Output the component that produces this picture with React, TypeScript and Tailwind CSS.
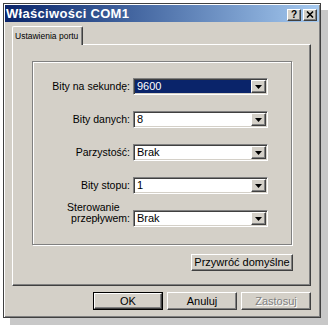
import clsx from "clsx";

const raised =
  "border border-t-white border-l-white border-r-[#404040] border-b-[#404040] shadow-[inset_-1px_-1px_0_#808080] bg-[#d4d0c8]";

const Arrow = () => (
  <svg width="7" height="4" viewBox="0 0 7 4">
    <path d="M0 0h7L3.5 4z" fill="#000" />
  </svg>
);

const Select = ({ value, selected }: { value: string; selected?: boolean }) => (
  <div className="flex h-[17px] w-[135px] border border-t-[#808080] border-l-[#808080] border-b-white border-r-white bg-white p-[1px] shadow-[inset_1px_1px_0_#404040,inset_-1px_-1px_0_#d4d0c8]">
    <div
      className={clsx(
        "flex flex-1 items-center pl-[2px] text-[11px] leading-none",
        selected ? "bg-[#0a246a] text-white" : "text-black"
      )}
    >
      {value}
    </div>
    <div className={clsx(raised, "flex w-[15px] items-center justify-center")}>
      <Arrow />
    </div>
  </div>
);

const Row = ({ label, value, selected }: { label: React.ReactNode; value: string; selected?: boolean }) => (
  <div className="flex h-[17px] items-end">
    <div className="w-[100px] pb-[3px] pr-[3px] text-right text-[10.5px] leading-[11px] text-black">{label}</div>
    <Select value={value} selected={selected} />
  </div>
);

const Button = ({ children, className, disabled }: { children: React.ReactNode; className?: string; disabled?: boolean }) => (
  <div
    className={clsx(
      raised,
      "flex items-center justify-center text-[11px]",
      disabled ? "text-[#808080] [text-shadow:1px_1px_0_#fff]" : "text-black",
      className
    )}
  >
    {children}
  </div>
);

export default function App() {
  return (
    <div className="h-[328px] w-[328px] overflow-hidden bg-white pl-[3px] pt-[3px] font-['Liberation_Sans',Arial,sans-serif]">
      <div className="flex h-[315px] w-[318px] flex-col border border-[#404040] bg-[#d4d0c8] p-[1px] shadow-[inset_1px_1px_0_#fff,inset_-1px_-1px_0_#808080,7px_7px_0_#c8c8c8]">
        {/* title bar */}
        <div className="flex h-[17px] items-center bg-linear-to-r from-[#0a246a] to-[#a6caf0] pl-[1px] pr-[2px]">
          <span className="flex-1 text-[13px] font-bold tracking-[0.3px] text-white">Właściwości COM1</span>
          <div className={clsx(raised, "mt-[2px] flex h-[12px] w-[14px] items-center justify-center text-[10px] font-bold leading-none text-black")}>?</div>
          <div className={clsx(raised, "ml-[2px] mt-[2px] flex h-[12px] w-[14px] items-center justify-center")}>
            <svg width="8" height="7" viewBox="0 0 8 7">
              <path d="M1 0.5L7 6.5M7 0.5L1 6.5" stroke="#000" strokeWidth="1.6" />
            </svg>
          </div>
        </div>

        <div className="flex flex-1 flex-col pl-[7px] pr-[8px] pt-[4px]">
          {/* tab */}
          <div className="flex">
            <div className="relative z-10 -mb-px flex h-[19px] w-[71px] items-center rounded-t-[2px] border border-b-0 border-t-white border-l-white border-r-[#404040] bg-[#d4d0c8] pl-[2px] text-[8.5px] text-black shadow-[inset_-1px_0_0_#808080]">
              Ustawienia portu
            </div>
          </div>

          {/* tab panel */}
          <div className="flex h-[242px] flex-col border border-t-white border-l-white border-r-[#404040] border-b-[#404040] shadow-[inset_-1px_-1px_0_#808080]">
            <div className="ml-[19px] mt-[16px] flex h-[184px] w-[260px] flex-col gap-[16px] border border-[#808080] pt-[16px] shadow-[inset_1px_1px_0_#fff,1px_1px_0_#fff]">
              <Row label="Bity na sekundę:" value="9600" selected />
              <Row label="Bity danych:" value="8" />
              <Row label="Parzystość:" value="Brak" />
              <Row label="Bity stopu:" value="1" />
              <Row
                label={
                  <div className="inline-block text-left">
                    <div className="-ml-[4px]">Sterowanie</div>
                    <div>przepływem:</div>
                  </div>
                }
                value="Brak"
              />
            </div>
            <div className="ml-[19px] mt-[9px] flex w-[261px] justify-end">
              <Button className="h-[17px] w-[102px] text-[10px]">Przywróć domyślne</Button>
            </div>
          </div>

          {/* bottom buttons */}
          <div className="mt-[6px] flex justify-end gap-[4px]">
            <div className="h-[18px] w-[70px] border border-black">
              <Button className="h-full w-full">OK</Button>
            </div>
            <Button className="h-[18px] w-[70px]">Anuluj</Button>
            <Button className="h-[18px] w-[70px]" disabled>
              Zastosuj
            </Button>
          </div>
        </div>
      </div>
    </div>
  );
}
